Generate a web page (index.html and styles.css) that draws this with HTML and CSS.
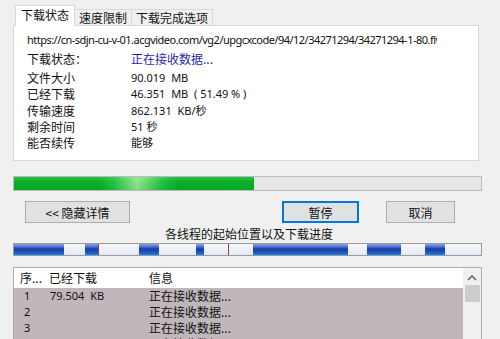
FILE: index.html
```html
<!DOCTYPE html>
<html>
<head>
<meta charset="utf-8">
<link rel="stylesheet" href="styles.css">
</head>
<body>
<div class="win">
  <div class="tabs">
    <div class="tab active">下载状态</div>
    <div class="tab">速度限制</div>
    <div class="tab">下载完成选项</div>
  </div>
  <div class="panel">
    <div class="url">https://cn-sdjn-cu-v-01.acgvideo.com/vg2/upgcxcode/94/12/34271294/34271294-1-80.flv</div>
    <div class="row status"><span class="lbl">下载状态：</span><span class="val blue">正在接收数据...</span></div>
    <div class="info">
      <div class="row"><span class="lbl">文件大小</span><span class="val">90.019&nbsp; MB</span></div>
      <div class="row"><span class="lbl">已经下载</span><span class="val">46.351&nbsp; MB &nbsp;( 51.49 % )</span></div>
      <div class="row"><span class="lbl">传输速度</span><span class="val">862.131&nbsp; KB/秒</span></div>
      <div class="row"><span class="lbl">剩余时间</span><span class="val">51 秒</span></div>
      <div class="row"><span class="lbl">能否续传</span><span class="val">能够</span></div>
    </div>
  </div>
  <div class="progress"><div class="fill" style="width:240px"></div></div>
  <div class="buttons">
    <div class="btn b1">&lt;&lt; 隐藏详情</div>
    <div class="btn b2 default">暂停</div>
    <div class="btn b3">取消</div>
  </div>
  <div class="caption">各线程的起始位置以及下载进度</div>
  <div class="threads">
    <div class="seg done" style="width:50px"></div>
    <div class="seg" style="width:21px"></div>
    <div class="seg done" style="width:13px"></div>
    <div class="seg mark"></div>
    <div class="seg" style="width:40px"></div>
    <div class="seg done" style="width:20px"></div>
    <div class="seg" style="width:37px"></div>
    <div class="seg done" style="width:8px"></div>
    <div class="seg" style="width:24px"></div>
    <div class="seg mark"></div>
    <div class="seg" style="width:24px"></div>
    <div class="seg done" style="width:95px"></div>
    <div class="seg" style="width:19px"></div>
    <div class="seg done" style="width:34px"></div>
    <div class="seg" style="width:24px"></div>
    <div class="seg done" style="width:20px"></div>
    <div class="seg grow"></div>
  </div>
  <div class="list">
    <div class="table">
      <div class="thead">
        <span class="c1">序...</span><span class="c2">已经下载</span><span class="c3">信息</span>
      </div>
      <div class="tr"><span class="c1 num">1</span><span class="c2">79.504&nbsp; KB</span><span class="c3">正在接收数据...</span></div>
      <div class="tr"><span class="c1 num">2</span><span class="c2"></span><span class="c3">正在接收数据...</span></div>
      <div class="tr"><span class="c1 num">3</span><span class="c2"></span><span class="c3">正在接收数据...</span></div>
      <div class="tr"><span class="c1 num">4</span><span class="c2"></span><span class="c3">正在接收数据...</span></div>
    </div>
    <div class="scroll">
      <svg class="up" width="10" height="6" viewBox="0 0 10 6"><path d="M1 5 L5 1 L9 5" fill="none" stroke="#606060" stroke-width="1.5"/></svg>
      <div class="thumb"></div>
    </div>
  </div>
</div>
</body>
</html>
```
FILE: styles.css
```css
* { box-sizing: border-box; }
html, body { margin: 0; padding: 0; }
body {
  background: #f0f0f0;
  font-family: "Noto Sans", "Noto Sans CJK SC", sans-serif;
  font-size: 12px;
  color: #111;
  width: 500px;
  height: 339px;
  overflow: hidden;
}
.win { padding-top: 5px; }
.tabs {
  display: flex;
  align-items: flex-end;
  margin-left: 15px;
  height: 20px;
  position: relative;
  z-index: 2;
}
.tab {
  height: 16px;
  line-height: 15px;
  padding: 0 4px;
  border: 1px solid #d9d9d9;
  border-bottom: none;
  background: #f0f0f0;
  font-family: "Noto Sans CJK SC", sans-serif;
  font-size: 12px;
  margin-left: -1px;
}
.tab.active {
  height: 21px;
  line-height: 18px;
  background: #fff;
  padding: 0 5px;
  margin-left: 0;
  margin-bottom: -1px;
  position: relative;
  z-index: 3;
}
.panel {
  margin-left: 13px;
  width: 466px;
  height: 136px;
  background: #fff;
  border: 1px solid #d9d9d9;
  padding: 6px 0 0 13px;
}
.url {
  font-family: "Noto Sans", sans-serif;
  font-size: 11px;
  letter-spacing: -0.52px;
  width: 410px;
  white-space: nowrap;
  overflow: hidden;
  line-height: 16px;
}
.row {
  display: flex;
  height: 16px;
  line-height: 16px;
  font-family: "Noto Sans", "Noto Sans CJK SC", sans-serif;
}
.row.status { margin-top: 3px; }
.info { margin-top: 3px; }
.info .row { height: 16.25px; }
.lbl { width: 104px; font-family: "Noto Sans CJK SC", sans-serif; font-size: 12px; }
.val { font-size: 11px; }
.blue { color: #1f1fb0; font-family: "Noto Sans CJK SC", sans-serif; font-size: 12px; }
.progress {
  margin: 15px 0 0 13px;
  width: 469px;
  height: 15px;
  border: 1px solid #bcbcbc;
  background: #e6e6e6;
}
.fill {
  height: 100%;
  background:
    linear-gradient(to bottom, rgba(255,255,255,0.15), rgba(255,255,255,0) 40%, rgba(0,0,0,0.05)),
    linear-gradient(to right, #06b025 0, #06b025 85px, #20c040 100px, #8ee68a 123px, #20c040 148px, #06b025 165px, #06b025 100%);
}
.buttons {
  display: flex;
  margin-top: 10px;
  height: 22px;
}
.btn {
  height: 22px;
  border: 1px solid #adadad;
  background: #e1e1e1;
  display: flex;
  align-items: center;
  justify-content: center;
  font-family: "Noto Sans CJK SC", sans-serif;
  font-size: 12px;
}
.b1 { margin-left: 25px; width: 105px; }
.b2 { margin-left: 152px; width: 77px; }
.b3 { margin-left: 27px; width: 69px; }
.default { border: 2px solid #0078d7; }
.caption {
  margin: 3px 0 0 165px;
  height: 17px;
  line-height: 16px;
  font-family: "Noto Sans CJK SC", sans-serif;
  font-size: 12px;
}
.threads {
  display: flex;
  margin: 0 0 0 13px;
  width: 469px;
  height: 13px;
  border: 1px solid #9a9a9a;
  background: #eef2fa;
}
.seg {
  height: 100%;
  background: linear-gradient(to bottom, #f6f8fc, #e4e9f3);
}
.seg.done {
  background: linear-gradient(to bottom, #8ca4e4 0, #5b7bd3 20%, #1c3da8 45%, #1b4bb8 65%, #1f80e0 100%);
}
.seg.mark { width: 1px; background: #8b3b58; }
.seg.grow { flex: 1; }
.list {
  margin: 11px 0 0 13px;
  width: 469px;
  height: 80px;
  border: 1px solid #adadad;
  border-bottom: none;
  display: flex;
  background: #fff;
}
.table { flex: 1; }
.thead {
  display: flex;
  height: 20px;
  line-height: 20px;
  background: #fff;
  font-family: "Noto Sans CJK SC", sans-serif;
  font-size: 12px;
}
.tr {
  display: flex;
  height: 16px;
  line-height: 16px;
  background: #c0b7bd;
  font-size: 11px;
}
.tr .c3 { font-family: "Noto Sans CJK SC", sans-serif; font-size: 12px; }
.c1 { width: 31px; padding-left: 6px; white-space: nowrap; }
.c1.num { padding-left: 10px; }
.c2 { width: 104px; padding-left: 5px; }
.thead .c2 { padding-left: 4px; }
.c3 { flex: 1; padding-left: 0; }
.scroll {
  width: 18px;
  background: #f0f0f0;
  display: flex;
  flex-direction: column;
  align-items: center;
}
.up { margin-top: 7px; }
.thumb {
  margin-top: 4px;
  width: 15px;
  height: 17px;
  background: #cdcdcd;
}
```
